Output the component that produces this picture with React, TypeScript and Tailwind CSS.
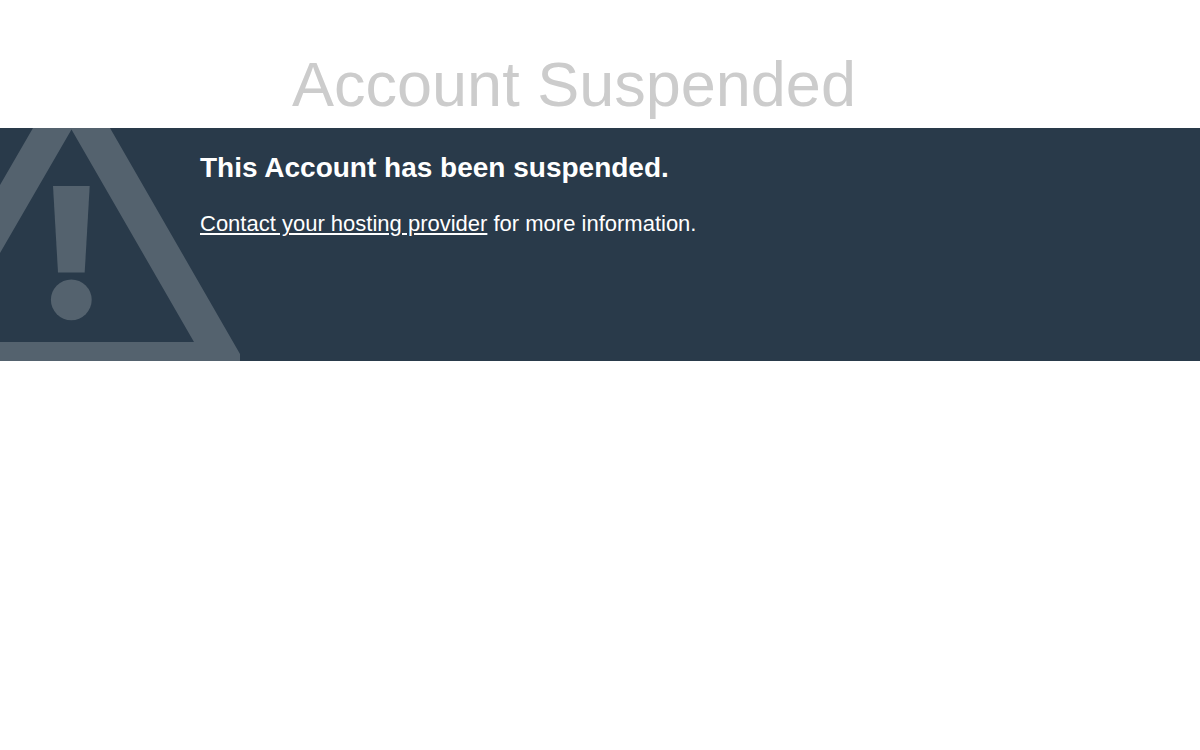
const WarningMark = () => (
  <svg
    className="pointer-events-none absolute top-0 left-0 h-[233px] w-60"
    viewBox="0 0 240 233"
    fill="#54626e"
    aria-hidden="true"
  >
    <path
      fillRule="evenodd"
      d="M33 0H110L240 226V233H0V214H194L71.5 1.5L0 125V57Z"
    />
    <path d="M53 58H89.7L84.7 144.5H58Z" />
    <circle cx="71.3" cy="171.8" r="20.4" />
  </svg>
);

const App = () => {
  return (
    <div className="min-h-screen bg-white font-['Liberation_Sans',Arial,sans-serif]">
      <header className="px-[200px] pt-10">
        <h1 className="pl-[92px] text-[63px] leading-[88px] text-[#cccccc]">
          Account Suspended
        </h1>
      </header>

      <main className="relative min-h-[233px] overflow-hidden bg-[#293a4a] pr-10 pl-[200px] text-white">
        <WarningMark />
        <div className="relative pt-6">
          <h2 className="text-[28px] leading-8 font-bold">
            This Account has been suspended.
          </h2>
          <p className="mt-6 text-[22px] leading-8">
            <a href="#" className="underline">
              Contact your hosting provider
            </a>{' '}
            for more information.
          </p>
        </div>
      </main>
    </div>
  );
};

export default App;
